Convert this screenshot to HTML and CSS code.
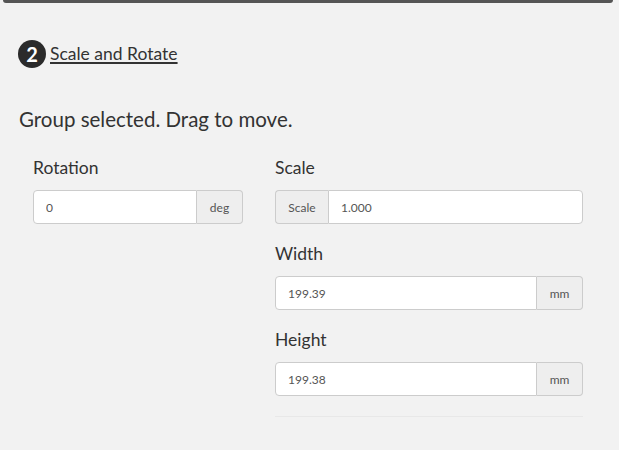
FILE: index.html
```html
<!DOCTYPE html>
<html>
<head>
<meta charset="utf-8">
<link rel="stylesheet" href="styles.css">
</head>
<body>
<div class="topbar"></div>
<div class="step">
  <span class="badge">2</span><a class="step-link" href="#">Scale and Rotate</a>
</div>
<h2 class="status">Group selected. Drag to move.</h2>
<div class="cols">
  <div class="col col-left">
    <div class="field">
      <div class="label">Rotation</div>
      <div class="group">
        <input class="input" value="0">
        <span class="addon addon-right">deg</span>
      </div>
    </div>
  </div>
  <div class="col col-right">
    <div class="field">
      <div class="label">Scale</div>
      <div class="group">
        <span class="addon addon-left">Scale</span>
        <input class="input" value="1.000">
      </div>
    </div>
    <div class="field">
      <div class="label">Width</div>
      <div class="group">
        <input class="input" value="199.39">
        <span class="addon addon-right">mm</span>
      </div>
    </div>
    <div class="field">
      <div class="label">Height</div>
      <div class="group">
        <input class="input" value="199.38">
        <span class="addon addon-right">mm</span>
      </div>
    </div>
    <div class="rule"></div>
  </div>
</div>
</body>
</html>
```
FILE: styles.css
```css
* { box-sizing: border-box; }
html, body { margin: 0; padding: 0; }
body {
  background: #f2f2f2;
  font-family: "Lato", "Open Sans", sans-serif;
  color: #333;
  width: 619px;
  height: 450px;
  overflow: hidden;
}
.topbar {
  height: 3px;
  margin: 0 6px 0 3px;
  background: #555;
  border-radius: 0 0 3px 3px;
}
.step {
  display: flex;
  align-items: center;
  padding: 34px 0 0 18px;
  height: 67px;
}
.badge {
  width: 28px;
  height: 28px;
  border-radius: 50%;
  background: #2b2b2b;
  color: #fff;
  font-weight: bold;
  font-size: 20px;
  display: flex;
  align-items: center;
  justify-content: center;
}
.step-link {
  color: #333;
  font-size: 17.5px;
  text-decoration: underline;
  text-decoration-thickness: 2px;
  text-underline-offset: 2px;
  padding-left: 4px;
}
.status {
  margin: 37px 0 0 19px;
  font-size: 20.5px;
  font-weight: normal;
  color: #333;
  line-height: 24px;
}
.cols {
  display: flex;
  gap: 32px;
  padding: 27px 0 0 33px;
}
.col-left { width: 210px; }
.col-right { width: 308px; }
.field { margin-bottom: 20px; }
.label {
  font-size: 17.5px;
  line-height: 20px;
  color: #333;
  margin-bottom: 12px;
}
.group {
  display: flex;
  height: 34px;
}
.input {
  flex: 1;
  min-width: 0;
  height: 34px;
  border: 1px solid #ccc;
  background: #fff;
  padding: 0 12px;
  font-family: inherit;
  font-size: 12px;
  color: #555;
  outline: none;
}
.addon {
  display: flex;
  align-items: center;
  justify-content: center;
  height: 34px;
  width: 46px;
  background: #eee;
  border: 1px solid #ccc;
  font-size: 12px;
  color: #555;
}
.addon-right {
  border-left: 0;
  border-radius: 0 4px 4px 0;
}
.group .input:first-child { border-radius: 4px 0 0 4px; }
.group .input:last-child { border-radius: 0 4px 4px 0; }
.addon-left {
  width: 53px;
  border-right: 0;
  border-radius: 4px 0 0 4px;
}
.rule {
  height: 1px;
  background: #e8e8e8;
  margin-top: 0;
}
```
